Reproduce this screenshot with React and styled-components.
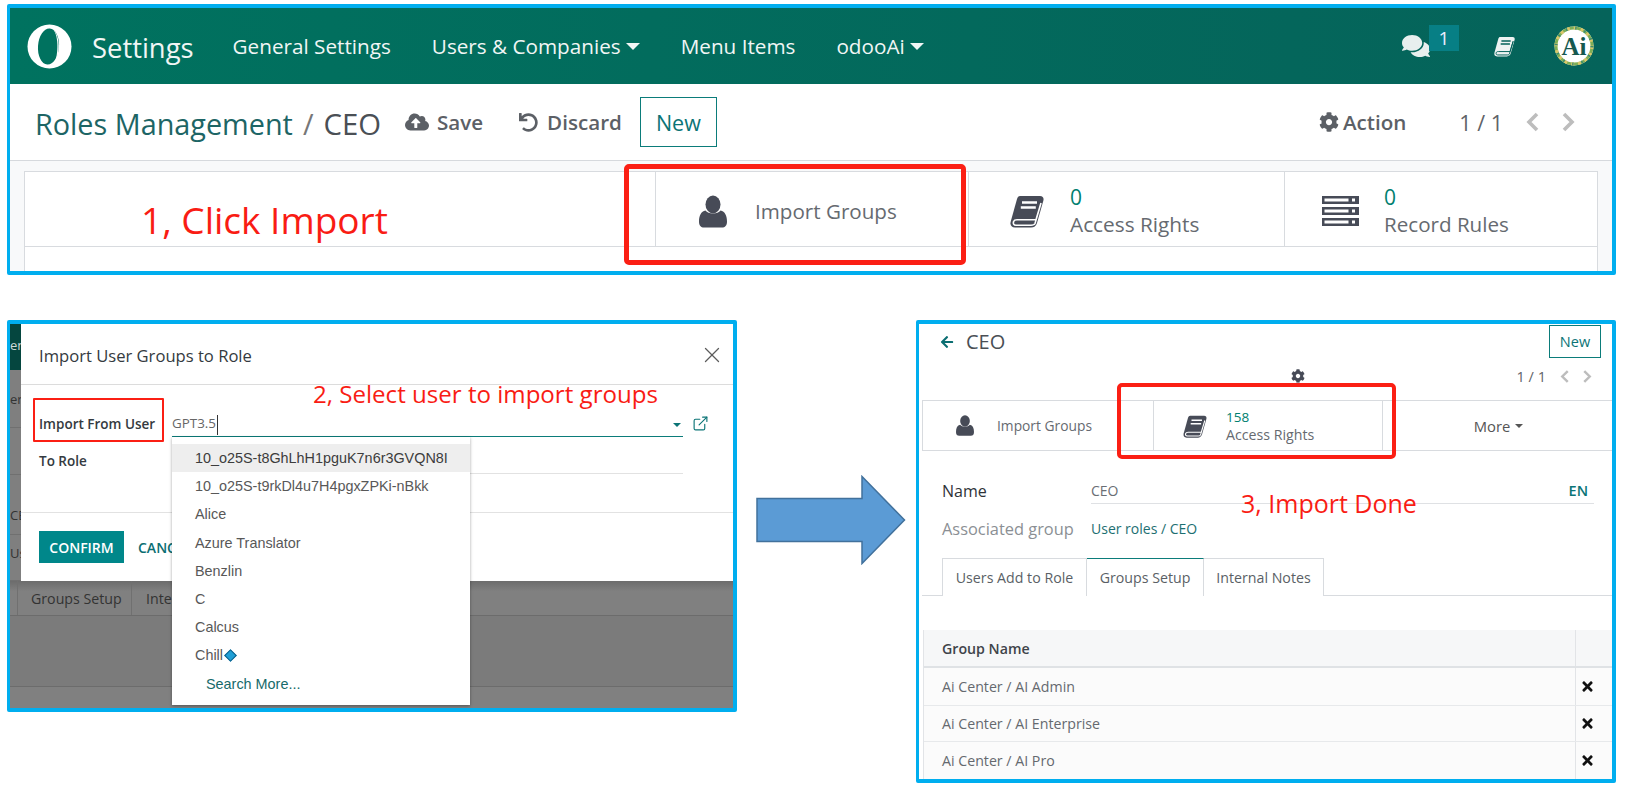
import React from "react";
import styled, { createGlobalStyle } from "styled-components";
import { FaComments, FaCog, FaUndo, FaCloudUploadAlt, FaArrowLeft, FaTimes } from "react-icons/fa";
import { X, ExternalLink } from "lucide-react";

const Global = createGlobalStyle`
  html, body { margin: 0; padding: 0; background: #fff; }
  body { font-family: "Open Sans", "Noto Sans", sans-serif; color: #4c4c4c; }
  * { box-sizing: border-box; }
`;

const Page = styled.div`
  width: 1631px;
  height: 797px;
  padding: 4px 15px 0 7px;
  overflow: hidden;
`;
const Panel = styled.section`
  position: relative;
  border: solid #00aeef;
  border-width: 4px 4px 4px 3px;
  border-radius: 2px;
  background: #fff;
  overflow: hidden;
  width: ${(p) => p.$w}px;
  height: ${(p) => p.$h}px;
`;
const LowerRow = styled.div`
  display: flex;
  align-items: flex-start;
  margin-top: 45px;
`;

/* annotations */
const RedBox = styled.div`
  position: absolute;
  left: ${(p) => p.$x}px;
  top: ${(p) => p.$y}px;
  width: ${(p) => p.$w}px;
  height: ${(p) => p.$h}px;
  border: ${(p) => p.$b}px solid #fb1f14;
  border-radius: ${(p) => (p.$b > 2 ? 5 : 1)}px;
  pointer-events: none;
  z-index: 5;
`;
const Note = styled.div`
  position: absolute;
  left: ${(p) => p.$x}px;
  top: ${(p) => p.$y}px;
  font-size: ${(p) => p.$s}px;
  line-height: 1.2;
  color: #f91c14;
  white-space: nowrap;
  z-index: 6;
`;

/* top nav */
const Nav = styled.header`
  height: 76px;
  display: flex;
  align-items: center;
  padding: 0 18px 0 17px;
  background: linear-gradient(90deg, #00725f, #05635a);
  color: #f1f6f5;
`;
const Brand = styled.div`
  font-size: 27.4px;
  margin: 3px 39px 0 20px;
`;
const NavItem = styled.div`
  font-size: 20.7px;
  margin-right: 41px;
  display: flex;
  align-items: center;
  gap: 5px;
`;
const Caret = styled.span`
  display: inline-block;
  width: 0;
  height: 0;
  border-left: ${(p) => p.$s}px solid transparent;
  border-right: ${(p) => p.$s}px solid transparent;
  border-top: ${(p) => p.$s}px solid ${(p) => p.$c || "currentColor"};
`;
const NavTools = styled.div`
  margin-left: auto;
  display: flex;
  align-items: center;
`;
const ChatWrap = styled.div`
  position: relative;
  width: 57px;
  height: 40px;
  color: #e8efee;
  display: flex;
  align-items: center;
  font-size: 28px;
`;
const Badge = styled.span`
  position: absolute;
  left: 27px;
  top: -1px;
  width: 30px;
  height: 26px;
  background: #077f85;
  color: #eef;
  font-size: 19px;
  text-align: center;
  line-height: 26px;
`;
const ToolBook = styled.div`
  margin-left: 35px;
  margin-right: 39px;
  display: flex;
`;

/* action bar */
const ActionBar = styled.div`
  height: 77px;
  display: flex;
  align-items: center;
  padding: 0 37px 0 25px;
  border-bottom: 1px solid #d6d9dd;
`;
const Crumb = styled.div`
  font-size: 28.8px;
  color: #1d6565;
  white-space: nowrap;
  margin: 4px 24px 0 0;
  display: flex;
  align-items: baseline;
`;
const CrumbSep = styled.span`
  color: #777;
  margin: 0 10px;
`;
const CrumbCur = styled.span`
  color: #4a4f55;
  font-size: 29.3px;
`;
const FlatBtn = styled.div`
  display: flex;
  align-items: center;
  gap: ${(p) => p.$gap}px;
  font-size: 20.6px;
  font-weight: 600;
  color: #5c6066;
  margin-right: ${(p) => p.$mr}px;
`;
const OutlineBtn = styled.div`
  border: 1px solid #0b7c7a;
  color: #0b7476;
  display: flex;
  align-items: center;
  justify-content: center;
  width: ${(p) => p.$w}px;
  height: ${(p) => p.$h}px;
  font-size: ${(p) => p.$s}px;
`;
const ActionRight = styled.div`
  margin-left: auto;
  display: flex;
  align-items: center;
`;
const Pager = styled.span`
  font-size: ${(p) => p.$s}px;
  color: #5f6368;
  margin: 0 ${(p) => p.$m}px 0 ${(p) => p.$ml}px;
  white-space: nowrap;
`;
const ChevronBox = styled.svg`
  display: block;
  margin-left: ${(p) => p.$ml}px;
`;
function Chevron({ dir, ml = 0, w = 14, h = 22 }) {
  return (
    <ChevronBox $ml={ml} width={w} height={h} viewBox="0 0 14 22">
      <polyline
        points={dir === "l" ? "11,3 3,11 11,19" : "3,3 11,11 3,19"}
        fill="none"
        stroke="#bdbdbd"
        strokeWidth="3.6"
      />
    </ChevronBox>
  );
}

/* sheet */
const SheetBg = styled.div`
  height: 110px;
  padding: 10px 14px 0;
  background: #f8f9fa;
`;
const Sheet = styled.div`
  height: 100px;
  background: #fff;
  border: 1px solid #d8dbdf;
  border-bottom: 0;
`;
const StatGrid = styled.div`
  display: grid;
  grid-template-columns: ${(p) => p.$cols};
  height: ${(p) => p.$h}px;
  border-bottom: 1px solid #d8dbdf;
`;
const StatCell = styled.div`
  display: flex;
  align-items: center;
  border-left: ${(p) => (p.$first ? "0" : "1px solid #d8dbdf")};
  padding: ${(p) => p.$pt || 0}px 0 0 ${(p) => p.$pl}px;
  gap: ${(p) => p.$gap}px;
`;
const StatText = styled.div`
  display: flex;
  flex-direction: column;
`;
const StatNum = styled.span`
  color: #00806f;
  font-size: ${(p) => p.$s}px;
  font-weight: 500;
  line-height: ${(p) => p.$lh}px;
`;
const StatLabel = styled.span`
  color: #666a70;
  font-size: ${(p) => p.$s}px;
  line-height: ${(p) => p.$lh}px;
  white-space: nowrap;
`;

/* icons */
const Logo = () => (
  <svg width="45" height="45" viewBox="0 0 45 45">
    <circle cx="22.5" cy="22.5" r="22" fill="#fff" />
    <ellipse cx="21.5" cy="22.5" rx="10.5" ry="18" fill="#00725f" transform="rotate(4 21.5 22.5)" />
    <path d="M26 5 C33 11 34 31 27 40.5 C31 33 32.5 13 26 5Z" fill="#fff" />
  </svg>
);
const UserIcon = ({ w, h }) => (
  <svg width={w} height={h} viewBox="0 0 28 32">
    <ellipse cx="14" cy="9" rx="7.5" ry="9" fill="#474b57" />
    <path d="M6.5 15 C9 19 19 19 21.5 15 C26 16 28 20 28 26 C28 30 26 32 23 32 H5 C2 32 0 30 0 26 C0 20 2 16 6.5 15Z" fill="#474b57" />
  </svg>
);
const BookIcon = ({ w, h, fill = "#474b57", cut = "#fff" }) => (
  <svg width={w} height={h} viewBox="0 0 34 33">
    <path d="M10 1 H30 C33 1 34 3 33.4 5.5 L27 28 C26 31 24 32.5 21 32.5 H5 C1.5 32.5 0 30 .6 27 L7 4 C7.6 2 8.6 1 10 1Z" fill={fill} />
    <path d="M12 7.5 H27 M10.8 12.5 H25.8" stroke={cut} strokeWidth="2.4" />
    <path d="M31 8 L25 28.5 C24.3 30 23 30.2 21 30.2 H6 C3.5 30.2 3 28.5 3.6 26.5 C4.2 25 5 24.7 7 24.7 H26 L31 8" fill="none" stroke={cut} strokeWidth="1.6" />
  </svg>
);
const ServerIcon = () => (
  <svg width="37" height="30" viewBox="0 0 37 30">
    {[0, 11, 22].map((y) => (
      <g key={y}>
        <rect x="0" y={y} width="37" height="8" fill="#474b57" />
        <rect x="2.5" y={y + 2.5} width="24" height="3" fill="#fff" />
        <rect x="30" y={y + 2.5} width="3" height="3" fill="#fff" />
      </g>
    ))}
  </svg>
);
const Avatar = () => (
  <svg width="40" height="40" viewBox="0 0 40 40">
    <circle cx="20" cy="20" r="19.5" fill="#fff" />
    <circle cx="20" cy="20" r="18" fill="none" stroke="#7fae55" strokeWidth="3" />
    <circle cx="20" cy="20" r="18" fill="none" stroke="#d9c66a" strokeWidth="3" strokeDasharray="3 4" />
    <circle cx="20" cy="20" r="18" fill="none" stroke="#3c8c6e" strokeWidth="3" strokeDasharray="1.5 8" />
    <text x="20" y="29" textAnchor="middle" fontFamily="Liberation Serif, serif" fontWeight="700" fontSize="25" fill="#16594f">Ai</text>
  </svg>
);
const Arrow = styled.svg`
  display: block;
  flex: none;
  margin: 155px 10px 0 19px;
`;

/* lower-left: dialog */
const Backdrop = styled.div`
  height: 100%;
  display: flex;
  flex-direction: column;
  background: #808080;
`;
const BackRow = styled.div`
  height: ${(p) => p.$h}px;
  flex: none;
  background: ${(p) => p.$bg};
  border-bottom: 1px solid ${(p) => p.$line};
  color: ${(p) => p.$c || "#333"};
  font-size: 13px;
  line-height: ${(p) => p.$lh || p.$h}px;
  display: flex;
  overflow: hidden;
  white-space: nowrap;
`;
const BackTabsRow = styled(BackRow)`
  background: linear-gradient(180deg, #6c6c6c, #808080 30%);
`;
const BackTab = styled.div`
  width: ${(p) => p.$w}px;
  padding-left: ${(p) => p.$pl}px;
  border-right: ${(p) => (p.$edge ? "1px solid #707070" : "0")};
  color: #333;
  font-size: 14.2px;
`;
const Modal = styled.div`
  position: absolute;
  left: 11px;
  top: 0;
  right: 0;
  height: 257px;
  background: #fff;
  display: flex;
  flex-direction: column;
  z-index: 2;
`;
const ModalHead = styled.div`
  height: 61px;
  flex: none;
  padding: 2px 8px 0 18px;
  display: flex;
  align-items: center;
  justify-content: space-between;
  border-bottom: 1px solid #dcdcdc;
`;
const ModalTitle = styled.div`
  font-size: 16.6px;
  font-weight: 500;
  color: #343a40;
`;
const ModalBody = styled.div`
  height: 128px;
  flex: none;
  padding: 22px 0 0 18px;
  border-bottom: 1px solid #e2e2e2;
`;
const FormRow = styled.div`
  display: flex;
  align-items: flex-end;
  height: ${(p) => p.$h}px;
`;
const FieldLabel = styled.div`
  width: 133px;
  flex: none;
  font-size: 13.5px;
  font-weight: 600;
  color: #343a40;
  line-height: 18px;
  padding-bottom: ${(p) => p.$pb}px;
`;
const FieldInput = styled.div`
  width: 511px;
  height: ${(p) => p.$h}px;
  flex: none;
  border-bottom: 1px solid ${(p) => p.$line};
  display: flex;
  align-items: center;
  justify-content: space-between;
  padding: ${(p) => p.$pt || 0}px 2px 0 0;
  font-size: 13.4px;
  color: #666;
`;
const Cursor = styled.span`
  border-left: 1px solid #333;
  height: 20px;
  display: inline-block;
  margin-left: 1px;
  vertical-align: middle;
`;
const ExtLink = styled.span`
  color: #0b7476;
  margin: 0 0 0 9px;
  padding-bottom: 5px;
  display: flex;
`;
const ModalFoot = styled.div`
  padding: 18px 0 0 18px;
  display: flex;
  gap: 14px;
  align-items: center;
`;
const Confirm = styled.div`
  width: 85px;
  height: 32px;
  background: #00878a;
  color: #fff;
  font-size: 14px;
  font-weight: 600;
  display: flex;
  align-items: center;
  justify-content: center;
`;
const Cancel = styled.div`
  color: #0b6e72;
  font-size: 14px;
  font-weight: 600;
`;
const Dropdown = styled.ul`
  position: absolute;
  left: 162px;
  top: 113px;
  width: 298px;
  height: 268px;
  margin: 0;
  padding: 7px 0 0;
  list-style: none;
  background: #fff;
  box-shadow: 0 1px 3px rgba(0, 0, 0, 0.35);
  font-family: "Liberation Sans", Arial, sans-serif;
  font-size: 14.4px;
  color: #555;
  z-index: 3;
`;
const DropItem = styled.li`
  height: 28.2px;
  line-height: 28.2px;
  padding-left: ${(p) => (p.$more ? 34 : 23)}px;
  background: ${(p) => (p.$active ? "#eeeeee" : "transparent")};
  color: ${(p) => (p.$more ? "#176a6a" : p.$active ? "#3c3c3c" : "#585858")};
  display: flex;
  align-items: center;
  white-space: nowrap;
`;
const Diamond = styled.span`
  width: 9px;
  height: 9px;
  margin-left: 3px;
  transform: rotate(45deg);
  background: #1f9fd6;
  border: 1px solid #0e5f88;
`;

/* lower-right: form */
const TopRow = styled.div`
  display: flex;
  align-items: center;
  justify-content: space-between;
  padding: 1px 11px 0 21px;
`;
const BackTitle = styled.div`
  display: flex;
  align-items: center;
  gap: 12px;
  font-size: 20px;
  color: #4a4f55;
`;
const SecondRow = styled.div`
  height: 42px;
  display: flex;
  align-items: center;
  padding: 0 20px 6px 372px;
  color: #474b57;
  font-size: 14px;
`;
const PagerWrap = styled.div`
  margin-left: auto;
  display: flex;
  align-items: center;
`;
const StatWrap = styled.div`
  margin-left: 3px;
  border-top: 1px solid #d8dbdf;
  border-left: 1px solid #d8dbdf;
`;
const MoreCell = styled.div`
  display: flex;
  align-items: center;
  justify-content: center;
  gap: 5px;
  font-size: 14.8px;
  font-weight: 500;
  color: #555;
  border-left: 1px solid #d8dbdf;
  padding-left: 2px;
`;
const FormArea = styled.div`
  padding: 0 18px 0 23px;
`;
const NameRow = styled.div`
  display: grid;
  grid-template-columns: 149px 1fr;
  align-items: end;
  margin-top: ${(p) => p.$mt}px;
`;
const NameLabel = styled.div`
  font-size: ${(p) => p.$s}px;
  color: ${(p) => p.$c};
  font-weight: ${(p) => p.$w || 400};
  line-height: 24px;
  padding-bottom: ${(p) => p.$pb || 0}px;
`;
const NameValue = styled.div`
  display: flex;
  justify-content: space-between;
  align-items: center;
  font-size: 14px;
  color: ${(p) => p.$c};
  height: 26px;
  padding: 0 6px 1px 0;
  border-bottom: ${(p) => (p.$line ? "1px solid #dfe1e4" : "0")};
`;
const EnTag = styled.span`
  color: #0b7476;
  font-weight: 600;
  font-size: 14.5px;
`;
const TabsBar = styled.div`
  margin: 16px 0 0 3px;
  height: 38px;
  padding-left: 20px;
  display: flex;
  border-bottom: 1px solid #d8dbdf;
`;
const Tab = styled.div`
  width: ${(p) => p.$w}px;
  height: 38px;
  border: 1px solid #d8dbdf;
  border-left-width: ${(p) => (p.$first ? 1 : 0)}px;
  border-bottom: 0;
  border-top-color: ${(p) => (p.$active ? "#0b7c7a" : "#d8dbdf")};
  display: flex;
  align-items: center;
  justify-content: center;
  font-size: 14.2px;
  color: #5a5f66;
  background: #fff;
`;
const Table = styled.div`
  margin: 34px 0 0 4px;
  border-left: 1px solid #e2e4e7;
`;
const TRow = styled.div`
  display: grid;
  grid-template-columns: 651px 1fr;
  height: ${(p) => p.$h}px;
  background: ${(p) => (p.$head ? "#f6f7f8" : "#fbfbfb")};
  border-bottom: ${(p) => (p.$head ? "2px solid #dfe2e5" : "1px solid #e7e9eb")};
`;
const TCell = styled.div`
  display: flex;
  align-items: center;
  padding-left: 18px;
  font-size: 14.2px;
  font-weight: ${(p) => (p.$head ? 600 : 400)};
  color: ${(p) => (p.$head ? "#3f444a" : "#65696f")};
`;
const XCell = styled.div`
  display: flex;
  align-items: center;
  padding-left: 4px;
  border-left: 1px solid #e2e4e7;
  font-size: 15px;
  color: #111;
`;

const users = [
  "10_o25S-t8GhLhH1pguK7n6r3GVQN8I",
  "10_o25S-t9rkDl4u7H4pgxZPKi-nBkk",
  "Alice",
  "Azure Translator",
  "Benzlin",
  "C",
  "Calcus",
];
const groups = [
  ["Ai Center / AI Admin", 38],
  ["Ai Center / AI Enterprise", 36],
  ["Ai Center / AI Pro", 38],
];

export default function App() {
  return (
    <Page>
      <Global />
      <Panel $w={1609} $h={271}>
        <Nav>
          <Logo />
          <Brand>Settings</Brand>
          <NavItem>General Settings</NavItem>
          <NavItem>Users &amp; Companies <Caret $s={7} /></NavItem>
          <NavItem>Menu Items</NavItem>
          <NavItem>odooAi <Caret $s={7} /></NavItem>
          <NavTools>
            <ChatWrap>
              <FaComments />
              <Badge>1</Badge>
            </ChatWrap>
            <ToolBook><BookIcon w={21} h={21} fill="#eef3f2" cut="#05635a" /></ToolBook>
            <Avatar />
          </NavTools>
        </Nav>
        <ActionBar>
          <Crumb>Roles Management<CrumbSep>/</CrumbSep><CrumbCur>CEO</CrumbCur></Crumb>
          <FlatBtn $gap={8} $mr={36}><FaCloudUploadAlt size={24} />Save</FlatBtn>
          <FlatBtn $gap={9} $mr={18}><FaUndo size={19} />Discard</FlatBtn>
          <OutlineBtn $w={77} $h={50} $s={21.5}>New</OutlineBtn>
          <ActionRight>
            <FlatBtn $gap={4} $mr={0}><FaCog size={20} />Action</FlatBtn>
            <Pager $s={21.5} $ml={53} $m={23}>1 / 1</Pager>
            <Chevron dir="l" />
            <Chevron dir="r" ml={21} />
          </ActionRight>
        </ActionBar>
        <SheetBg>
          <Sheet>
            <StatGrid $cols="630px 313px 316px 1fr" $h={75}>
              <StatCell $first />
              <StatCell $pl={43} $pt={4} $gap={28}>
                <UserIcon w={28} h={33} />
                <StatLabel $s={20.6} $lh={26}>Import Groups</StatLabel>
              </StatCell>
              <StatCell $pl={41} $pt={4} $gap={26}>
                <BookIcon w={34} h={33} />
                <StatText>
                  <StatNum $s={21} $lh={25}>0</StatNum>
                  <StatLabel $s={20.8} $lh={28}>Access Rights</StatLabel>
                </StatText>
              </StatCell>
              <StatCell $pl={37} $pt={4} $gap={25}>
                <ServerIcon />
                <StatText>
                  <StatNum $s={21} $lh={25}>0</StatNum>
                  <StatLabel $s={20.6} $lh={28}>Record Rules</StatLabel>
                </StatText>
              </StatCell>
            </StatGrid>
          </Sheet>
        </SheetBg>
        <Note $x={131} $y={190} $s={37}>1, Click Import</Note>
        <RedBox $x={614} $y={156} $w={342} $h={101} $b={5} />
      </Panel>

      <LowerRow>
        <Panel $w={730} $h={392}>
          <Backdrop>
            <BackRow $h={46} $bg="#05463f" $line="#05463f" $c="#cfd8d6" $lh={42}>en</BackRow>
            <BackRow $h={58} $bg="#7f7f7f" $line="#707070">er</BackRow>
            <BackRow $h={47} $bg="#7f7f7f" $line="#707070" />
            <BackRow $h={60} $bg="#7f7f7f" $line="#707070" $lh={80}>CE</BackRow>
            <BackRow $h={46} $bg="#7f7f7f" $line="#707070" $lh={36}>Us</BackRow>
            <BackTabsRow $h={35} $line="#6c6c6c">
              <BackTab $w={8} $pl={0} $edge />
              <BackTab $w={114} $pl={13} $edge>Groups Setup</BackTab>
              <BackTab $w={40} $pl={14}>Inte</BackTab>
            </BackTabsRow>
            <BackRow $h={71} $bg="#7b7b7b" $line="#6c6c6c" />
          </Backdrop>
          <Modal>
            <ModalHead>
              <ModalTitle>Import User Groups to Role</ModalTitle>
              <X size={26} strokeWidth={1.2} color="#5c5c5c" />
            </ModalHead>
            <ModalBody>
              <FormRow $h={30}>
                <FieldLabel $pb={4}>Import From User</FieldLabel>
                <FieldInput $h={30} $pt={6} $line="#0b7c7a">
                  <span>GPT3.5<Cursor /></span>
                  <Caret $s={4.5} $c="#0b7476" />
                </FieldInput>
                <ExtLink><ExternalLink size={17} strokeWidth={1.6} /></ExtLink>
              </FormRow>
              <FormRow $h={37}>
                <FieldLabel $pb={4}>To Role</FieldLabel>
                <FieldInput $h={27} $line="#e2e2e2" />
              </FormRow>
            </ModalBody>
            <ModalFoot>
              <Confirm>CONFIRM</Confirm>
              <Cancel>CANC</Cancel>
            </ModalFoot>
          </Modal>
          <Dropdown>
            {users.map((u, i) => (
              <DropItem key={u} $active={i === 0}>{u}</DropItem>
            ))}
            <DropItem>Chill<Diamond /></DropItem>
            <DropItem $more>Search More...</DropItem>
          </Dropdown>
          <RedBox $x={23} $y={74} $w={131} $h={44} $b={2} />
          <Note $x={303} $y={56} $s={24.1}>2, Select user to import groups</Note>
        </Panel>

        <Arrow width="150" height="90" viewBox="0 0 150 90">
          <path d="M1 23.5 H106 V1.5 L148.5 45 L106 88.5 V66.5 H1 Z" fill="#5b9bd5" stroke="#41719c" strokeWidth="1.5" />
        </Arrow>

        <Panel $w={700} $h={463}>
          <TopRow>
            <BackTitle>
              <FaArrowLeft size={14} color="#0b6e72" />
              CEO
            </BackTitle>
            <OutlineBtn $w={52} $h={33} $s={14.5}>New</OutlineBtn>
          </TopRow>
          <SecondRow>
            <FaCog />
            <PagerWrap>
              <Pager $s={14.5} $ml={0} $m={14}>1 / 1</Pager>
              <Chevron dir="l" w={10} h={15} />
              <Chevron dir="r" ml={12} w={10} h={15} />
            </PagerWrap>
          </SecondRow>
          <StatWrap>
            <StatGrid $cols="230px 229px 1fr" $h={50}>
              <StatCell $first $pl={33} $gap={23}>
                <UserIcon w={18} h={21} />
                <StatLabel $s={13.8} $lh={18}>Import Groups</StatLabel>
              </StatCell>
              <StatCell $pl={29} $pt={2} $gap={19}>
                <BookIcon w={24} h={23} />
                <StatText>
                  <StatNum $s={13.5} $lh={17}>158</StatNum>
                  <StatLabel $s={14.2} $lh={18}>Access Rights</StatLabel>
                </StatText>
              </StatCell>
              <MoreCell>More <Caret $s={4} /></MoreCell>
            </StatGrid>
          </StatWrap>
          <FormArea>
            <NameRow $mt={27}>
              <NameLabel $s={16} $c="#2f3338" $w={500} $pb={1}>Name</NameLabel>
              <NameValue $c="#6a6e74" $line>CEO<EnTag>EN</EnTag></NameValue>
            </NameRow>
            <NameRow $mt={12}>
              <NameLabel $s={16.4} $c="#8b8f94" $pb={1}>Associated group</NameLabel>
              <NameValue $c="#1d6f72">User roles / CEO</NameValue>
            </NameRow>
          </FormArea>
          <TabsBar>
            <Tab $first $w={145}>Users Add to Role</Tab>
            <Tab $active $w={117}>Groups Setup</Tab>
            <Tab $w={120}>Internal Notes</Tab>
          </TabsBar>
          <Table>
            <TRow $head $h={38}>
              <TCell $head>Group Name</TCell>
              <XCell />
            </TRow>
            {groups.map(([g, h]) => (
              <TRow key={g} $h={h}>
                <TCell>{g}</TCell>
                <XCell><FaTimes /></XCell>
              </TRow>
            ))}
          </Table>
          <Note $x={322} $y={164} $s={25}>3, Import Done</Note>
          <RedBox $x={198} $y={59} $w={279} $h={76} $b={4} />
        </Panel>
      </LowerRow>
    </Page>
  );
}
